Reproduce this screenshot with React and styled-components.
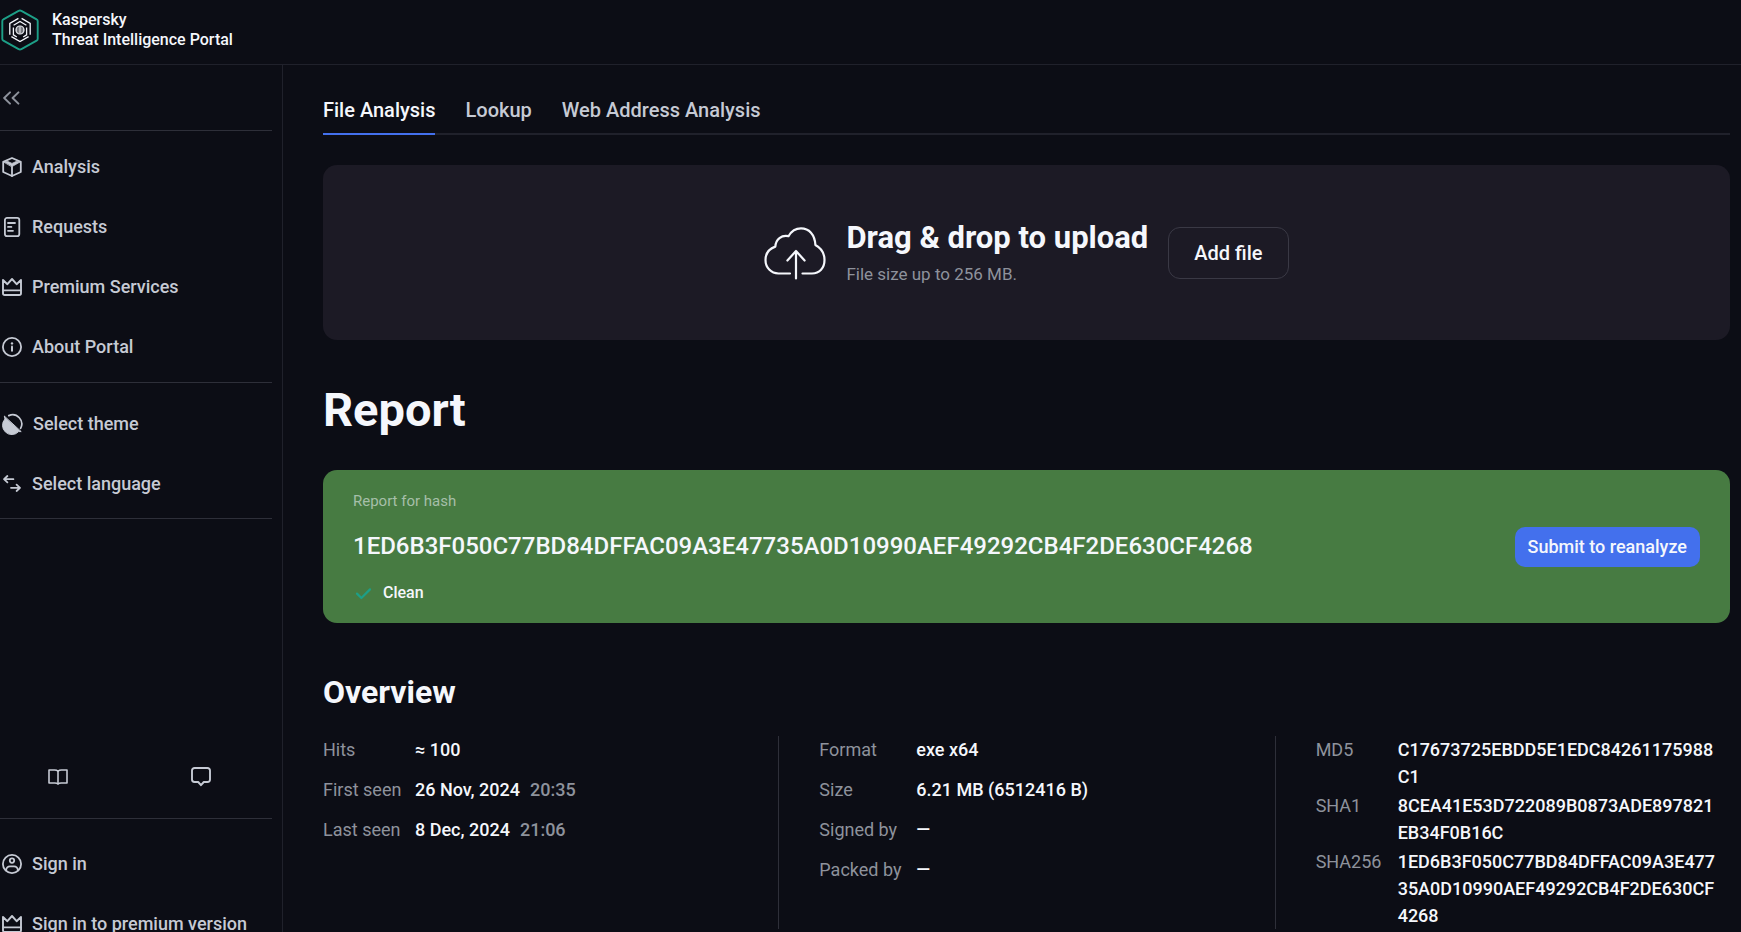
import React from "react";
import styled, { createGlobalStyle, css } from "styled-components";

const color = {
  page: "#0c0d15",
  panel: "#1c1a25",
  frame: "#20212b",
  rule: "#2e2f39",
  outline: "#3a3945",
  text: "#f5f7fc",
  soft: "#c6cad4",
  muted: "#8e929c",
  brand: "#1d9f87",
  accent: "#4370ed",
  success: "#477b42",
};

const GlobalStyle = createGlobalStyle`
  *, *::before, *::after { box-sizing: border-box; }
  body {
    margin: 0;
    background: ${color.page};
    color: ${color.text};
    font-family: Roboto, "Liberation Sans", sans-serif;
    font-size: 18px;
    line-height: 24px;
  }
  h1, h2, h3, p, dl, dd, ul { margin: 0; padding: 0; }
  button { font: inherit; cursor: pointer; }
  a { color: inherit; text-decoration: none; }
`;

const Shell = styled.div`
  display: flex;
  flex-direction: column;
  height: 100vh;
  overflow: hidden;
`;

const Header = styled.header`
  flex: none;
  display: flex;
  align-items: center;
  height: 65px;
  padding-bottom: 4px;
  border-bottom: 1px solid ${color.frame};
`;

const Brand = styled.a`
  display: flex;
  align-items: center;
  gap: 12px;
  font-size: 16px;
  font-weight: 500;
  line-height: 20px;
`;

const BrandName = styled.span`
  display: flex;
  flex-direction: column;
`;

const Body = styled.div`
  flex: 1;
  display: flex;
  min-height: 0;
`;

const Sidebar = styled.aside`
  flex: none;
  width: 283px;
  padding-right: 10px;
  border-right: 1px solid ${color.frame};
  overflow: hidden;
`;

const Group = styled.div`
  display: flex;
  flex-direction: column;
  padding: ${(p) => p.$pad || "6px 0 5px"};
  border-bottom: ${(p) => (p.$last ? "none" : `1px solid ${color.rule}`)};
`;

const navItem = css`
  display: flex;
  align-items: center;
  gap: 10px;
  height: 60px;
  padding: 0 0 0 2px;
  border: 0;
  background: none;
  color: ${color.soft};
  font-size: 18px;
  font-weight: 500;
  text-align: left;
  white-space: nowrap;
`;

const NavLink = styled.a`
  ${navItem}
`;

const NavButton = styled.button`
  ${navItem}
`;

const Tools = styled.div`
  display: flex;
  align-items: center;
  justify-content: space-between;
  height: 80px;
  margin-top: 220px;
  padding: 0 51px 4px 38px;
  border-bottom: 1px solid ${color.rule};
`;

const IconButton = styled.button`
  display: flex;
  align-items: center;
  justify-content: center;
  width: ${(p) => p.$width || "40px"};
  height: 40px;
  padding: 0;
  border: 0;
  background: none;
  color: ${color.soft};
`;

const FoldRow = styled.div`
  display: flex;
  align-items: center;
  height: 66px;
  border-bottom: 1px solid ${color.rule};
`;

const FoldButton = styled(IconButton)`
  color: ${color.muted};
`;

const Main = styled.main`
  flex: 1;
  min-width: 0;
  padding: 24px 11px 0 40px;
  overflow-y: auto;
  scrollbar-width: none;
`;

const Tabs = styled.nav`
  display: flex;
  gap: 30px;
  border-bottom: 2px solid ${color.frame};
`;

const Tab = styled.a`
  height: 46px;
  margin-bottom: -2px;
  padding-top: 9px;
  border-bottom: 2px solid ${(p) => (p.$active ? color.accent : "transparent")};
  color: ${(p) => (p.$active ? color.text : color.soft)};
  font-size: 20px;
  font-weight: 500;
`;

const DropZone = styled.section`
  display: flex;
  align-items: center;
  justify-content: center;
  gap: 20px;
  height: 175px;
  margin-top: 30px;
  border-radius: 14px;
  background: ${color.panel};
`;

const DropTitle = styled.h2`
  font-size: 31px;
  font-weight: 700;
  line-height: 36px;
`;

const DropHint = styled.p`
  padding-top: 6px;
  color: ${color.muted};
  font-size: 17px;
`;

const OutlineButton = styled.button`
  height: 52px;
  padding: 0 25px;
  border: 1px solid ${color.outline};
  border-radius: 12px;
  background: none;
  color: ${color.text};
  font-size: 20px;
  font-weight: 500;
`;

const PageTitle = styled.h1`
  margin-top: 44px;
  font-size: 47px;
  font-weight: 700;
  line-height: 52px;
`;

const Verdict = styled.section`
  display: flex;
  align-items: center;
  justify-content: space-between;
  gap: 24px;
  height: 153px;
  margin-top: 34px;
  padding: 0 30px;
  border-radius: 14px;
  background: ${color.success};
`;

const VerdictText = styled.div`
  display: flex;
  flex-direction: column;
  gap: 20px;
`;

const VerdictLabel = styled.p`
  color: #a6bfa9;
  font-size: 15px;
  line-height: 20px;
`;

const Hash = styled.h3`
  padding-bottom: 2px;
  font-size: 24px;
  font-weight: 500;
  line-height: 30px;
`;

const Status = styled.p`
  display: flex;
  align-items: center;
  gap: 10px;
  font-size: 16px;
  font-weight: 500;
  line-height: 20px;
`;

const PrimaryButton = styled.button`
  flex: none;
  height: 40px;
  padding: 0 13px;
  border: 0;
  border-radius: 10px;
  background: ${color.accent};
  color: ${color.text};
  font-weight: 500;
`;

const SectionTitle = styled.h2`
  margin-top: 50px;
  font-size: 32px;
  font-weight: 700;
  line-height: 38px;
`;

const Overview = styled.div`
  display: grid;
  grid-template-columns: repeat(3, minmax(0, 1fr));
  gap: 82px;
  margin-top: 25px;
`;

const Facts = styled.dl`
  display: grid;
  grid-template-columns: ${(p) => p.$label} minmax(0, 1fr);
  align-content: start;
  row-gap: ${(p) => (p.$dense ? "2px" : "13px")};
  padding-right: 10px;
  line-height: 27px;

  & + & {
    margin-left: -41px;
    padding-left: 40px;
    border-left: 1px solid ${color.rule};
  }
`;

const Term = styled.dt`
  color: ${color.muted};
  white-space: nowrap;
`;

const Value = styled.dd`
  font-weight: 500;
  overflow-wrap: anywhere;
`;

const Time = styled.span`
  margin-left: 10px;
  color: ${color.muted};
`;

const Icon = ({ w = 20, h = 20, sw = 2, children }) => (
  <svg
    width={w}
    height={h}
    viewBox={`0 0 ${w} ${h}`}
    fill="none"
    stroke="currentColor"
    strokeWidth={sw}
    strokeLinecap="round"
    strokeLinejoin="round"
    aria-hidden="true"
  >
    {children}
  </svg>
);

const Logo = () => (
  <Icon w={40} h={42}>
    <path
      stroke={color.brand}
      strokeWidth="1.9"
      d="M18.6 1.9 3.4 10.3A2 2 0 0 0 2.3 12v18a2 2 0 0 0 1.1 1.7l15.2 8.4a3 3 0 0 0 2.8 0l15.2-8.4a2 2 0 0 0 1.1-1.7V12a2 2 0 0 0-1.1-1.7L21.4 1.9a3 3 0 0 0-2.8 0Z"
    />
    <g strokeWidth="1.3" strokeLinecap="butt" strokeLinejoin="miter">
      <path d="M18.4 9.4 9.8 14.4v11.4M21.6 9.4l8.600 5v11.400M11.400 27.600l8.600 5 8.600-5" />
      <path d="M13.400 18.400v7.400l3.400 2.200M26.600 18.400v7.400l-3.400 2.200M13.600 16.200l6.400-3.700 6.400 3.700" />
      <circle cx="20" cy="21" r="4" strokeWidth="1.200" />
      <path d="M16 21h8M20 17v8M17 19h6M17 23h6" strokeWidth=".9" />
    </g>
  </Icon>
);

const FoldIcon = () => (
  <Icon w={18} h={14}>
    <path d="M8 1.4 2.2 7 8 12.6M16.4 1.4 10.6 7l5.8 5.6" />
  </Icon>
);

const BoxIcon = () => (
  <Icon sw={1.8}>
    <path d="M10 1 18.8 4.8v10.2L10 19 1.2 15V4.8Z" />
    <path d="M10 9.8V19" />
    <path d="M1.6 4.8 6 4.6 10 6.4l4-1.8 4.4.2L10 9.6Z" fill="currentColor" strokeWidth=".8" />
  </Icon>
);

const RequestsIcon = () => (
  <Icon sw={1.8}>
    <rect x="2.9" y=".9" width="14.4" height="18.2" rx="2.2" />
    <path d="M6 6h7M6 9.9h3.4M6 13.8h5" />
  </Icon>
);

const CrownIcon = () => (
  <Icon sw={1.9}>
    <path d="M1 3v13.200a1.800 1.800 0 0 0 1.800 1.800h14.400a1.800 1.800 0 0 0 1.800-1.800V3l-4.400 4.200L10 2 5.400 7.200Z" />
    <path d="M1.4 13.400h17.200" />
  </Icon>
);

const InfoIcon = () => (
  <Icon sw={1.8}>
    <circle cx="10" cy="10" r="9.1" />
    <path d="M10 9.6v4.2" strokeWidth="2" />
    <circle cx="10" cy="6.4" r="1.2" fill="currentColor" stroke="none" />
  </Icon>
);

const ThemeIcon = () => (
  <Icon w={21} h={22}>
    <path d="M2.400 3.400 3 6A9 9 0 0 0 16.600 18.600L18.800 18.600Z" fill="currentColor" strokeWidth="1" />
    <path d="M6.800 2.600A9.200 9.200 0 0 1 18.600 15.400" strokeWidth="1.700" />
  </Icon>
);

const LanguageIcon = () => (
  <Icon sw={1.8}>
    <path d="M5.4 2 2 5.2l3.4 3.2M2.4 5.2h9M14.6 10.6 18 13.8 14.6 17M9 13.8h8.6" />
  </Icon>
);

const BookIcon = () => (
  <Icon sw={1.6}>
    <path d="M10 4.2C9 3.2 8 3 6.6 3H1v13h5.8c1.4 0 2.4.2 3.2 1 .8-.8 1.8-1 3.2-1H19V3h-5.6C12 3 11 3.2 10 4.2Z" />
    <path d="M10 4.2V16.8" />
  </Icon>
);

const ChatIcon = () => (
  <Icon sw={1.9}>
    <path d="M3.500 1h13A2.500 2.500 0 0 1 19 3.500v9a2.500 2.500 0 0 1-2.500 2.500h-3.700L10 18.200 7.200 15H3.500A2.500 2.500 0 0 1 1 12.500v-9A2.500 2.500 0 0 1 3.500 1Z" />
  </Icon>
);

const UserIcon = () => (
  <Icon sw={1.8}>
    <circle cx="10" cy="10" r="9.1" />
    <circle cx="10" cy="6.6" r="2.2" />
    <path d="M4 16.4c.4-2.600 1.800-4 4-4h4c2.200 0 3.600 1.400 4 4" />
  </Icon>
);

const CloudIcon = () => (
  <Icon w={62} h={54} sw={2.200}>
    <path d="M26 47.500H14.500C7 47.500 1.500 41.500 1.500 34c0-6.500 3.800-11.200 9.800-13.400C11.800 13 17.500 8.800 24.500 10.200 27.500 5 32 2.400 37 2.400c8 0 13.800 5.800 14.400 16.600C57 22 60.500 27 60.500 34c0 8-5 13.500-12.500 13.500H38.500" />
    <path d="M32 52.500V25M23.400 34.500 32 25l8.600 9.500" />
  </Icon>
);

const CheckIcon = () => (
  <Icon sw={2.2}>
    <path d="M4 10.600 8.400 15 17 6.400" stroke={color.brand} />
  </Icon>
);

const sections = [
  { label: "Analysis", Glyph: BoxIcon },
  { label: "Requests", Glyph: RequestsIcon },
  { label: "Premium Services", Glyph: CrownIcon },
  { label: "About Portal", Glyph: InfoIcon },
];

const preferences = [
  { label: "Select theme", Glyph: ThemeIcon },
  { label: "Select language", Glyph: LanguageIcon },
];

const account = [
  { label: "Sign in", Glyph: UserIcon },
  { label: "Sign in to premium version", Glyph: CrownIcon },
];

const tabs = ["File Analysis", "Lookup", "Web Address Analysis"];

const SHA256 = "1ED6B3F050C77BD84DFFAC09A3E47735A0D10990AEF49292CB4F2DE630CF4268";

const facts = [
  {
    label: "92px",
    rows: [
      ["Hits", "≈ 100"],
      ["First seen", "26 Nov, 2024", "20:35"],
      ["Last seen", "8 Dec, 2024", "21:06"],
    ],
  },
  {
    label: "97px",
    rows: [
      ["Format", "exe x64"],
      ["Size", "6.21 MB (6512416 B)"],
      ["Signed by", "—"],
      ["Packed by", "—"],
    ],
  },
  {
    label: "82px",
    dense: true,
    rows: [
      ["MD5", "C17673725EBDD5E1EDC84261175988C1"],
      ["SHA1", "8CEA41E53D722089B0873ADE897821EB34F0B16C"],
      ["SHA256", SHA256],
    ],
  },
];

export default function App() {
  return (
    <>
      <GlobalStyle />
      <Shell>
        <Header>
          <Brand href="#home">
            <Logo />
            <BrandName>
              <span>Kaspersky</span>
              <span>Threat Intelligence Portal</span>
            </BrandName>
          </Brand>
        </Header>
        <Body>
          <Sidebar>
            <FoldRow>
              <FoldButton $width="22px" aria-label="Collapse menu">
                <FoldIcon />
              </FoldButton>
            </FoldRow>
            <Group as="nav">
              {sections.map(({ label, Glyph }) => (
                <NavLink key={label} href="#section">
                  <Glyph />
                  {label}
                </NavLink>
              ))}
            </Group>
            <Group $pad="11px 0 4px">
              {preferences.map(({ label, Glyph }) => (
                <NavButton key={label}>
                  <Glyph />
                  {label}
                </NavButton>
              ))}
            </Group>
            <Tools>
              <IconButton aria-label="Documentation">
                <BookIcon />
              </IconButton>
              <IconButton aria-label="Feedback">
                <ChatIcon />
              </IconButton>
            </Tools>
            <Group $pad="15px 0 0" $last>
              {account.map(({ label, Glyph }) => (
                <NavLink key={label} href="#account">
                  <Glyph />
                  {label}
                </NavLink>
              ))}
            </Group>
          </Sidebar>
          <Main>
            <Tabs>
              {tabs.map((name, i) => (
                <Tab key={name} href="#tab" $active={i === 0}>
                  {name}
                </Tab>
              ))}
            </Tabs>
            <DropZone>
              <CloudIcon />
              <div>
                <DropTitle>Drag &amp; drop to upload</DropTitle>
                <DropHint>File size up to 256 MB.</DropHint>
              </div>
              <OutlineButton>Add file</OutlineButton>
            </DropZone>
            <PageTitle>Report</PageTitle>
            <Verdict>
              <VerdictText>
                <VerdictLabel>Report for hash</VerdictLabel>
                <Hash>{SHA256}</Hash>
                <Status>
                  <CheckIcon />
                  Clean
                </Status>
              </VerdictText>
              <PrimaryButton>Submit to reanalyze</PrimaryButton>
            </Verdict>
            <SectionTitle>Overview</SectionTitle>
            <Overview>
              {facts.map(({ label, dense, rows }) => (
                <Facts key={label} $label={label} $dense={dense}>
                  {rows.map(([term, value, time]) => (
                    <React.Fragment key={term}>
                      <Term>{term}</Term>
                      <Value>
                        {value}
                        {time && <Time>{time}</Time>}
                      </Value>
                    </React.Fragment>
                  ))}
                </Facts>
              ))}
            </Overview>
          </Main>
        </Body>
      </Shell>
    </>
  );
}
